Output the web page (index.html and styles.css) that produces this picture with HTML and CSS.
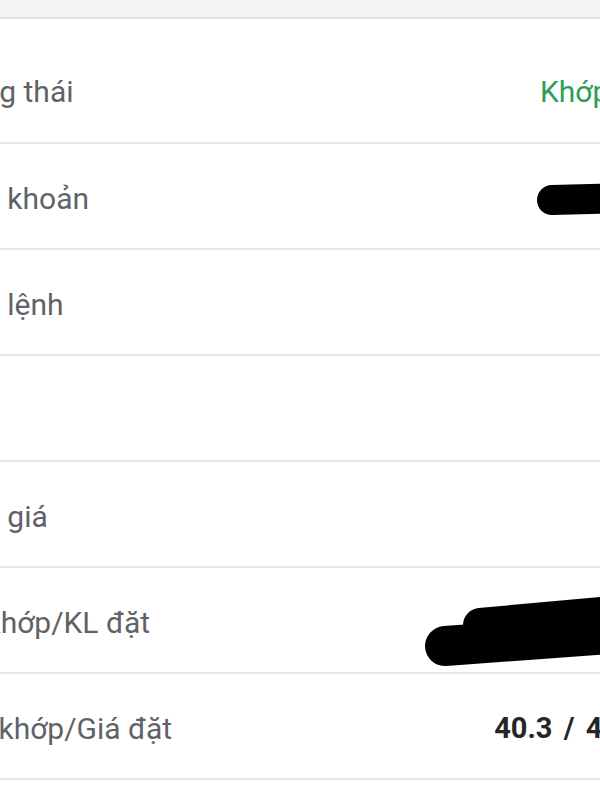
FILE: index.html
```html
<!DOCTYPE html>
<html lang="vi">
<head>
  <meta charset="UTF-8" />
  <meta name="viewport" content="width=device-width, initial-scale=1.0" />
  <title>Chi tiết lệnh</title>
  <link rel="stylesheet" href="styles.css">
</head>
<body>
<div class="screen">
  <div class="topbar"></div>

  <div class="list">
    <div class="row first">
      <div class="label cut-trang">Trạng thái</div>
      <div class="value green">Khớp hết</div>
    </div>

    <div class="row">
      <div class="label cut-tai">Tài khoản</div>
      <div class="value">
        <svg class="redact-short" width="115" height="40" viewBox="0 0 115 40">
          <line x1="17" y1="24" x2="130" y2="21" stroke="#000" stroke-width="30" stroke-linecap="round" />
        </svg>
      </div>
    </div>

    <div class="row">
      <div class="label cut-loai">Loại lệnh</div>
      <div class="value"></div>
    </div>

    <div class="row">
      <div class="label cut-ma">Mã</div>
      <div class="value"></div>
    </div>

    <div class="row">
      <div class="label cut-loai">Loại giá</div>
      <div class="value"></div>
    </div>

    <div class="row">
      <div class="label cut-kl">KL khớp/KL đặt</div>
      <div class="value">
        <svg class="redact-long" width="225" height="100" viewBox="0 0 225 100">
          <line x1="20" y1="76" x2="240" y2="60" stroke="#000" stroke-width="40" stroke-linecap="round" />
          <line x1="55" y1="55" x2="240" y2="38" stroke="#000" stroke-width="34" stroke-linecap="round" />
        </svg>
      </div>
    </div>

    <div class="row">
      <div class="label cut-gia">Giá khớp/Giá đặt</div>
      <div class="value bold">40.3 / 40.3</div>
    </div>

    <div class="row last"></div>
  </div>
</div>
</body>
</html>
```

FILE: styles.css
```css
* {
  box-sizing: border-box;
  margin: 0;
  padding: 0;
}

body {
  font-family: Roboto, 'Noto Sans', sans-serif;
  background-color: #fff;
  color: #5f6368;
}

.screen {
  width: 600px;
  height: 800px;
  overflow: hidden;
}

.topbar {
  height: 19px;
  background-color: #f3f4f6;
  border-bottom: 2px solid #e3e4e6;
}

.list {
  margin-right: -50px;
}

.row {
  display: flex;
  align-items: center;
  height: 106px;
  padding-top: 4px;
  border-bottom: 2px solid #e6e7e9;
}

.row.first {
  height: 125px;
  padding-top: 22px;
}

.row.last {
  border-bottom: none;
}

.label {
  font-size: 30px;
  white-space: nowrap;
  color: #5f6368;
}

.cut-trang { margin-left: -60px; }
.cut-tai { margin-left: -40px; }
.cut-loai { margin-left: -57px; }
.cut-ma { margin-left: -62px; }
.cut-kl { margin-left: -57px; }
.cut-gia { margin-left: -53px; }

.value {
  margin-left: auto;
  white-space: nowrap;
  font-size: 30px;
  color: #222;
  display: flex;
  align-items: center;
  margin-top: -4px;
}

.value.green {
  color: #2f9e55;
  margin-top: 0;
  margin-right: -9px;
}

.value.bold {
  font-size: 29px;
  font-weight: bold;
  color: #262626;
  word-spacing: 4px;
  margin-top: 0;
  margin-right: 6px;
}

.value svg {
  display: block;
  overflow: visible;
}
```
